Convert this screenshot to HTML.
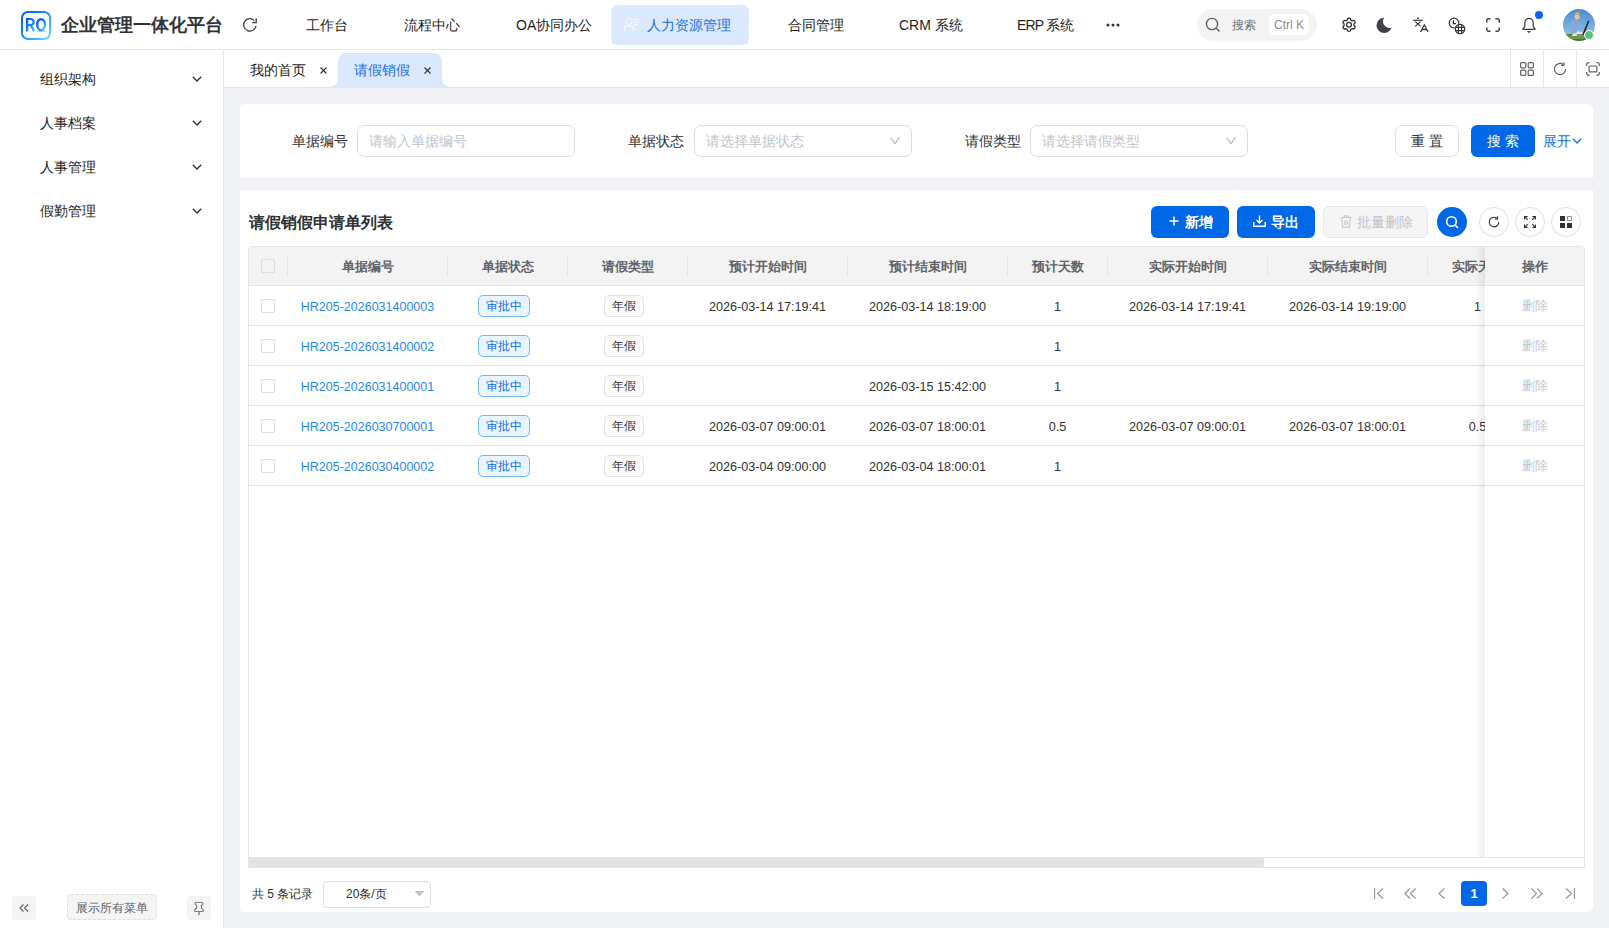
<!DOCTYPE html>
<html><head><meta charset="utf-8">
<style>
*{box-sizing:border-box;margin:0;padding:0}
html,body{width:1609px;height:928px;overflow:hidden;background:#f1f2f5;font-family:"Liberation Sans",sans-serif;color:#303133}
.a{position:absolute}
.t{position:absolute;white-space:nowrap;line-height:20px;height:20px}
#hdr{left:0;top:0;width:1609px;height:50px;background:#fff;border-bottom:1px solid #e4e6eb}
#side{left:0;top:50px;width:224px;height:878px;background:#fff;border-right:1px solid #e4e6eb}
#tabs{left:224px;top:50px;width:1385px;height:38px;background:#fff;border-bottom:1px solid #e4e6eb}
.card{position:absolute;background:#fff}
svg{position:absolute;overflow:visible}
.hd{position:absolute;top:10px;height:20px;line-height:20px;text-align:center;font-size:13px;font-weight:bold;color:#606266;white-space:nowrap}
.cl{position:absolute;height:39px;line-height:39px;text-align:center;white-space:nowrap;overflow:hidden}
.id{font-size:12.5px;color:#1e88f0;line-height:43px}
.dt{font-size:12.6px;color:#303133;line-height:43px}
.del{font-size:13px;color:#c6c8cc}
.tag1{width:52px;height:22px;line-height:20px;border:1px solid #74b6f5;background:#e8f5ff;border-radius:5px;font-size:12px;color:#0d6ae0;text-align:center}
.tag2{width:40px;height:22px;line-height:20px;border:1px solid #e3e3e5;background:#fafafa;border-radius:5px;font-size:12px;color:#303133;text-align:center}

</style></head><body>

<!-- HEADER -->
<div id="hdr" class="a">
  <div class="a" style="left:21px;top:11px;width:30px;height:29px;border-radius:7px;padding:2.4px;background:linear-gradient(135deg,#0050f2 0%,#1890ff 50%,#6ee9ff 100%)">
    <div style="width:25.2px;height:24.2px;border-radius:5px;background:#fff"></div>
  </div>
  <svg style="left:25px;top:17px" width="23" height="16" viewBox="0 0 23 16"><defs><linearGradient id="lg" x1="0" y1="0" x2="1" y2="1"><stop offset="0" stop-color="#0050f5"/><stop offset="0.6" stop-color="#1b8cff"/><stop offset="1" stop-color="#5fd8ff"/></linearGradient></defs><path d="M0.9 14.4V1H5.6C8.3 1 9.9 2.5 9.9 4.9C9.9 6.7 8.9 7.9 7.4 8.4L10.6 14.4H7.9L5.1 8.9H3.3V14.4ZM3.3 6.9H5.4C6.7 6.9 7.5 6.2 7.5 5C7.5 3.8 6.7 3.1 5.4 3.1H3.3Z" fill="url(#lg)"/><ellipse cx="16.1" cy="7.7" rx="3.9" ry="5.5" fill="none" stroke="url(#lg)" stroke-width="2.4"/><path d="M12.4 14.2H21.2" stroke="#8a8a8a" stroke-width="0.9" stroke-dasharray="1.2 0.5"/></svg>
  <div class="t" style="left:61px;top:15px;font-size:18px;font-weight:bold;color:#303236">企业管理一体化平台</div>
  <!-- refresh -->
  <svg style="left:243px;top:18px" width="14" height="14" viewBox="0 0 14 14"><path d="M13 7.9A6.2 6.2 0 1 1 11.4 2.6" fill="none" stroke="#3a3d42" stroke-width="1.3"/><path d="M13.2 0.3V4.6H9.2" fill="none" stroke="#3a3d42" stroke-width="1.3"/></svg>
  <div class="t" style="left:306px;top:15px;font-size:14px;color:#1d1e20">工作台</div>
  <div class="t" style="left:404px;top:15px;font-size:14px;color:#1d1e20">流程中心</div>
  <div class="t" style="left:516px;top:15px;font-size:14px;color:#1d1e20">OA协同办公</div>
  <div class="a" style="left:611px;top:5px;width:138px;height:40px;border-radius:6px;background:#dce8fb"></div>
  <svg style="left:622px;top:17px" width="18" height="16" viewBox="0 0 18 16"><circle cx="7" cy="4.3" r="3.1" fill="none" stroke="#f2f7fe" stroke-width="1.2"/><path d="M2.4 14.5V11.8C2.4 10.4 3.4 9.4 4.8 9.4H9.2C10.6 9.4 11.6 10.4 11.6 11.8V14.5" fill="none" stroke="#f6f9fe" stroke-width="1.2"/><path d="M12.1 2.5H17M12.1 5H17M12.1 7.5H15.6" stroke="#f6f9fe" stroke-width="1.1"/></svg>
  <div class="t" style="left:647px;top:15px;font-size:14px;color:#1b6fe3">人力资源管理</div>
  <div class="t" style="left:788px;top:15px;font-size:14px;color:#1d1e20">合同管理</div>
  <div class="t" style="left:899px;top:15px;font-size:14px;color:#1d1e20">CRM 系统</div>
  <div class="t" style="left:1017px;top:15px;font-size:14px;color:#1d1e20"><span style="letter-spacing:-0.9px">ERP </span>系统</div>
  <svg style="left:1106px;top:23px" width="14" height="4" viewBox="0 0 14 4"><circle cx="2" cy="2" r="1.5" fill="#303133"/><circle cx="7" cy="2" r="1.5" fill="#303133"/><circle cx="12" cy="2" r="1.5" fill="#303133"/></svg>

  <!-- search pill -->
  <div class="a" style="left:1197px;top:9px;width:120px;height:32px;border-radius:16px;background:#f3f3f4"></div>
  <svg style="left:1205px;top:17px" width="16" height="16" viewBox="0 0 16 16"><circle cx="7" cy="7" r="5.6" fill="none" stroke="#606266" stroke-width="1.4"/><path d="M11.2 11.2L14.5 14.5" stroke="#606266" stroke-width="1.4"/></svg>
  <div class="t" style="left:1232px;top:15px;font-size:12px;color:#6e7176">搜索</div>
  <div class="a" style="left:1269px;top:14px;width:40px;height:21px;border-radius:6px;background:#fff"></div>
  <div class="t" style="left:1274px;top:15px;font-size:12px;color:#8a8d92">Ctrl K</div>

  <!-- icons -->
  <svg style="left:1341px;top:17px" width="16" height="16" viewBox="0 0 16 16"><path d="M8 1.2L9.3 1.5L9.8 3.1L11.2 3.9L12.8 3.4L13.8 4.4L14.1 5.7L12.9 6.9V8.5L14.1 9.7L13.8 11L12.8 12L11.2 11.6L9.8 12.4L9.3 14L8 14.4L6.7 14L6.2 12.4L4.8 11.6L3.2 12L2.2 11L1.9 9.7L3.1 8.5V6.9L1.9 5.7L2.2 4.4L3.2 3.4L4.8 3.9L6.2 3.1L6.7 1.5Z" fill="none" stroke="#303133" stroke-width="1.3" stroke-linejoin="round"/><circle cx="8" cy="7.8" r="2.4" fill="none" stroke="#303133" stroke-width="1.3"/></svg>
  <svg style="left:1376px;top:16px" width="16" height="18" viewBox="0 0 16 18"><defs><mask id="mm"><rect width="16" height="18" fill="#fff"/><circle cx="13.6" cy="5.4" r="6.6" fill="#000"/></mask></defs><circle cx="8.2" cy="9.4" r="7.7" fill="#404348" mask="url(#mm)"/></svg>
  <svg style="left:1413px;top:17px" width="16" height="16" viewBox="0 0 16 16"><circle cx="5" cy="1.2" r="0.9" fill="#303133"/><path d="M0.3 3.3H9.7" stroke="#303133" stroke-width="1.2"/><path d="M2.2 4.6L7.6 9.4M7.6 4.6L2.2 9.4" stroke="#303133" stroke-width="1.2"/><path d="M7.6 15L11.3 7.8L15 15M8.9 12.5H13.7" fill="none" stroke="#303133" stroke-width="1.3"/></svg>
  <svg style="left:1448px;top:17px" width="18" height="18" viewBox="0 0 18 18"><circle cx="6" cy="6" r="4.8" fill="none" stroke="#303133" stroke-width="1.2"/><path d="M5.4 3.3V6.6H8" fill="none" stroke="#303133" stroke-width="1.2"/><circle cx="12" cy="12" r="5.6" fill="#fff"/><circle cx="12" cy="12" r="4.7" fill="none" stroke="#303133" stroke-width="1.3"/><path d="M7.6 10.4H16.4M7.6 13.6H16.4M10.4 7.5V16.5M13.6 7.5V16.5" stroke="#303133" stroke-width="1.1"/></svg>
  <svg style="left:1486px;top:18px" width="14" height="14" viewBox="0 0 14 14"><path d="M0.8 4.6V2.2C0.8 1.4 1.4 0.8 2.2 0.8H4.6M9.4 0.8H11.8C12.6 0.8 13.2 1.4 13.2 2.2V4.6M13.2 9.4V11.8C13.2 12.6 12.6 13.2 11.8 13.2H9.4M4.6 13.2H2.2C1.4 13.2 0.8 12.6 0.8 11.8V9.4" fill="none" stroke="#404348" stroke-width="1.5"/></svg>
  <svg style="left:1522px;top:17px" width="14" height="16" viewBox="0 0 14 16"><path d="M7 1.4C4.6 1.4 2.8 3.3 2.8 5.8V9.6L1 11.8C0.8 12.1 1 12.4 1.3 12.4H12.7C13 12.4 13.2 12.1 13 11.8L11.2 9.6V5.8C11.2 3.3 9.4 1.4 7 1.4Z" fill="none" stroke="#35383d" stroke-width="1.2" stroke-linejoin="round"/><path d="M5.6 14.2L7 15.2L8.4 14.2" fill="none" stroke="#35383d" stroke-width="1.2"/></svg>
  <div class="a" style="left:1535px;top:11px;width:8px;height:8px;border-radius:50%;background:#0b66e4"></div>
  <!-- avatar -->
  <svg style="left:1563px;top:9px" width="32" height="32" viewBox="0 0 32 32"><defs><clipPath id="ac"><circle cx="16" cy="16" r="16"/></clipPath><linearGradient id="sky" x1="0" y1="0" x2="0" y2="1"><stop offset="0" stop-color="#4b8bd3"/><stop offset="1" stop-color="#9ccdf0"/></linearGradient></defs>
  <g clip-path="url(#ac)"><rect width="32" height="32" fill="url(#sky)"/>
  <path d="M0 26C8 24 18 25 32 27V32H0Z" fill="#4f7330"/><path d="M2 27C8 25.5 16 26 24 27.5L20 30L4 30Z" fill="#6f9a45"/>
  <path d="M10 23C13 22 19 22.5 22 24.5L21 27H9Z" fill="#dfe6ea"/>
  <path d="M8 25L9 13C10 10.5 13 10 14.5 11L17.5 16L21 19.5L19 21L15 18.5L13.5 24Z" fill="#8aa6d6"/>
  <circle cx="14.2" cy="7.8" r="2.6" fill="#e6c3a0"/><path d="M11.5 7.5C11.3 4.5 13 2.6 15 3C16.5 3.3 17 5 16.6 6L14 5.6Z" fill="#d2ad66"/>
  <path d="M26.6 11.5L21.2 25.6L19 26L24.8 12Z" fill="#222428"/><path d="M14 25.5H21.5L22 26.5H13.5Z" fill="#333"/>
  </g></svg>
  <div class="a" style="left:1584px;top:30px;width:10px;height:10px;border-radius:50%;background:#55c57a;border:1.5px solid #fff"></div>
</div>

<!-- SIDEBAR -->
<div id="side" class="a">
  <div class="t" style="left:40px;top:19px;font-size:14px;color:#1d1e20">组织架构</div>
  <div class="t" style="left:40px;top:63px;font-size:14px;color:#1d1e20">人事档案</div>
  <div class="t" style="left:40px;top:107px;font-size:14px;color:#1d1e20">人事管理</div>
  <div class="t" style="left:40px;top:151px;font-size:14px;color:#1d1e20">假勤管理</div>
  <svg style="left:192px;top:26px" width="10" height="6" viewBox="0 0 10 6"><path d="M0.8 0.8L5 5L9.2 0.8" fill="none" stroke="#303133" stroke-width="1.3"/></svg>
  <svg style="left:192px;top:70px" width="10" height="6" viewBox="0 0 10 6"><path d="M0.8 0.8L5 5L9.2 0.8" fill="none" stroke="#303133" stroke-width="1.3"/></svg>
  <svg style="left:192px;top:114px" width="10" height="6" viewBox="0 0 10 6"><path d="M0.8 0.8L5 5L9.2 0.8" fill="none" stroke="#303133" stroke-width="1.3"/></svg>
  <svg style="left:192px;top:158px" width="10" height="6" viewBox="0 0 10 6"><path d="M0.8 0.8L5 5L9.2 0.8" fill="none" stroke="#303133" stroke-width="1.3"/></svg>

  <div class="a" style="left:12px;top:846px;width:24px;height:24px;border-radius:4px;background:#f3f3f4"></div>
  <svg style="left:19px;top:854px" width="10" height="8" viewBox="0 0 10 8"><path d="M4.5 0.5L1 4L4.5 7.5M9 0.5L5.5 4L9 7.5" fill="none" stroke="#606266" stroke-width="1.2"/></svg>
  <div class="a" style="left:67px;top:844px;width:90px;height:26px;border-radius:4px;background:#f4f4f5;border:1px dashed #dcdfe6"></div>
  <div class="t" style="left:76px;top:848px;font-size:12px;color:#606266">展示所有菜单</div>
  <div class="a" style="left:187px;top:846px;width:24px;height:24px;border-radius:4px;background:#f3f3f4"></div>
  <svg style="left:193px;top:851px" width="12" height="15" viewBox="0 0 12 15"><path d="M3 1.5H9C10 1.5 10.3 2.8 9.4 3.6L8.4 4.4V7L10 8.6C10.8 9.4 10.4 10.5 9.4 10.5H2.6C1.6 10.5 1.2 9.4 2 8.6L3.6 7V4.4L2.6 3.6C1.7 2.8 2 1.5 3 1.5Z" fill="none" stroke="#7d8085" stroke-width="1.2"/><path d="M6 10.5V14" stroke="#7d8085" stroke-width="1.4"/></svg>
</div>

<!-- TABS -->
<div id="tabs" class="a">
  <div class="t" style="left:26px;top:10px;font-size:14px;color:#1d1e20">我的首页</div>
  <svg style="left:96px;top:17px" width="7" height="7" viewBox="0 0 7 7"><path d="M0.5 0.5L6.5 6.5M6.5 0.5L0.5 6.5" stroke="#303133" stroke-width="1.1"/></svg>
  <div class="a" style="left:114px;top:3px;width:104px;height:34px;border-radius:8px 8px 0 0;background:#dce8fb"></div>
  <div class="a" style="left:106px;top:29px;width:8px;height:8px;background:radial-gradient(circle at 0 0,transparent 7.5px,#dce8fb 8px)"></div>
  <div class="a" style="left:218px;top:29px;width:8px;height:8px;background:radial-gradient(circle at 100% 0,transparent 7.5px,#dce8fb 8px)"></div>
  <div class="t" style="left:130px;top:10px;font-size:14px;color:#1b6fe3">请假销假</div>
  <svg style="left:200px;top:17px" width="7" height="7" viewBox="0 0 7 7"><path d="M0.5 0.5L6.5 6.5M6.5 0.5L0.5 6.5" stroke="#303133" stroke-width="1.1"/></svg>
  <svg style="left:1296px;top:12px" width="14" height="14" viewBox="0 0 14 14"><rect x="0.6" y="0.6" width="5.2" height="5.2" rx="1" fill="none" stroke="#606266" stroke-width="1.2"/><rect x="8.2" y="0.6" width="5.2" height="5.2" rx="1" fill="none" stroke="#606266" stroke-width="1.2"/><rect x="0.6" y="8.2" width="5.2" height="5.2" rx="1" fill="none" stroke="#606266" stroke-width="1.2"/><rect x="8.2" y="8.2" width="5.2" height="5.2" rx="1" fill="none" stroke="#606266" stroke-width="1.2"/></svg>
  <svg style="left:1329px;top:12px" width="14" height="14" viewBox="0 0 14 14"><path d="M12.6 7A5.6 5.6 0 1 1 10.4 2.6" fill="none" stroke="#606266" stroke-width="1.2"/><path d="M11 0.3V3.4H7.9" fill="none" stroke="#606266" stroke-width="1.2"/></svg>
  <svg style="left:1362px;top:12px" width="14" height="14" viewBox="0 0 14 14"><path d="M0.7 4V2.5C0.7 1.5 1.5 0.7 2.5 0.7H3.6M10.4 0.7H11.5C12.5 0.7 13.3 1.5 13.3 2.5V4M13.3 10V11.5C13.3 12.5 12.5 13.3 11.5 13.3H10.4M3.6 13.3H2.5C1.5 13.3 0.7 12.5 0.7 11.5V10" fill="none" stroke="#606266" stroke-width="1.2"/><rect x="3.1" y="4" width="7.8" height="5.8" rx="0.8" fill="none" stroke="#606266" stroke-width="1.2"/></svg>
  <div class="a" style="left:1286px;top:0;width:1px;height:37px;background:#e4e6eb"></div>
  <div class="a" style="left:1319px;top:0;width:1px;height:37px;background:#e4e6eb"></div>
  <div class="a" style="left:1352px;top:0;width:1px;height:37px;background:#e4e6eb"></div>
</div>

<!-- SEARCH CARD -->
<div class="card" style="left:240px;top:104px;width:1353px;height:74px;border-radius:6px 6px 0 0"></div>

<!-- TABLE CARD -->
<div class="card" style="left:240px;top:190px;width:1353px;height:722px;border-radius:0 0 6px 6px"></div>


<!-- SEARCH FORM -->
<div class="t" style="left:292px;top:131px;font-size:14px;color:#303133">单据编号</div>
<div class="a" style="left:357px;top:125px;width:218px;height:32px;border:1px solid #dddee1;border-radius:7px;background:#fff"></div>
<div class="t" style="left:369px;top:131px;font-size:14px;color:#c0c4cc">请输入单据编号</div>
<div class="t" style="left:628px;top:131px;font-size:14px;color:#303133">单据状态</div>
<div class="a" style="left:694px;top:125px;width:218px;height:32px;border:1px solid #dddee1;border-radius:7px;background:#fff"></div>
<div class="t" style="left:706px;top:131px;font-size:14px;color:#c0c4cc">请选择单据状态</div>
<svg style="left:890px;top:137px" width="10" height="7" viewBox="0 0 10 7"><path d="M0.5 0.5L5 6.5L9.5 0.5" fill="none" stroke="#aeb1b5" stroke-width="1.1"/></svg>
<div class="t" style="left:965px;top:131px;font-size:14px;color:#303133">请假类型</div>
<div class="a" style="left:1030px;top:125px;width:218px;height:32px;border:1px solid #dddee1;border-radius:7px;background:#fff"></div>
<div class="t" style="left:1042px;top:131px;font-size:14px;color:#c0c4cc">请选择请假类型</div>
<svg style="left:1226px;top:137px" width="10" height="7" viewBox="0 0 10 7"><path d="M0.5 0.5L5 6.5L9.5 0.5" fill="none" stroke="#aeb1b5" stroke-width="1.1"/></svg>
<div class="a" style="left:1395px;top:125px;width:64px;height:32px;border:1px solid #dddee1;border-radius:7px;background:#fff"></div>
<div class="t" style="left:1411px;top:131px;font-size:14px;color:#303133;letter-spacing:4px">重置</div>
<div class="a" style="left:1471px;top:125px;width:64px;height:32px;border-radius:6px;background:#0067e6"></div>
<div class="t" style="left:1487px;top:131px;font-size:14px;color:#fff;letter-spacing:4px;font-weight:500">搜索</div>
<div class="t" style="left:1543px;top:131px;font-size:14px;color:#1b6fe3">展开</div>
<svg style="left:1572px;top:138px" width="10" height="6" viewBox="0 0 10 6"><path d="M0.8 0.8L5 5L9.2 0.8" fill="none" stroke="#1b6fe3" stroke-width="1.4"/></svg>

<!-- TABLE TOOLBAR -->
<div class="t" style="left:249px;top:213px;font-size:16px;font-weight:bold;color:#303133">请假销假申请单列表</div>
<div class="a" style="left:1151px;top:206px;width:78px;height:32px;border-radius:6px;background:#0067e6"></div>
<svg style="left:1169px;top:216px" width="10" height="10" viewBox="0 0 10 10"><path d="M5 0.5V9.5M0.5 5H9.5" stroke="#fff" stroke-width="1.5"/></svg>
<div class="t" style="left:1185px;top:212px;font-size:14px;color:#fff;font-weight:bold">新增</div>
<div class="a" style="left:1237px;top:206px;width:78px;height:32px;border-radius:6px;background:#0067e6"></div>
<svg style="left:1253px;top:215px" width="13" height="12" viewBox="0 0 13 12"><path d="M6.5 0.5V8M3.5 5L6.5 8L9.5 5M0.8 7V11.2H12.2V7" fill="none" stroke="#fff" stroke-width="1.4"/></svg>
<div class="t" style="left:1271px;top:212px;font-size:14px;color:#fff;font-weight:bold">导出</div>
<div class="a" style="left:1323px;top:206px;width:105px;height:32px;border:1px solid #e4e7ed;border-radius:6px;background:#f5f5f5"></div>
<svg style="left:1340px;top:215px" width="12" height="13" viewBox="0 0 12 13"><path d="M0.5 2.5H11.5M4 2.5V0.8H8V2.5M1.8 2.5L2.5 12.2H9.5L10.2 2.5M4.8 5V10M7.2 5V10" fill="none" stroke="#c8cad0" stroke-width="1.2"/></svg>
<div class="t" style="left:1357px;top:212px;font-size:14px;color:#c0c4cc">批量删除</div>
<div class="a" style="left:1437px;top:207px;width:30px;height:30px;border-radius:50%;background:#0067e6"></div>
<svg style="left:1445px;top:215px" width="15" height="15" viewBox="0 0 15 15"><circle cx="6.5" cy="6.5" r="4.8" fill="none" stroke="#fff" stroke-width="1.6"/><path d="M10 10L13 13" stroke="#fff" stroke-width="1.6"/></svg>
<div class="a" style="left:1479px;top:207px;width:30px;height:30px;border-radius:50%;border:1px solid #dfe0e2;background:#fff"></div>
<svg style="left:1488px;top:216px" width="12" height="12" viewBox="0 0 12 12"><path d="M10.8 6A4.8 4.8 0 1 1 8.8 2.2" fill="none" stroke="#303133" stroke-width="1.1"/><path d="M9.5 0.3V3H6.8" fill="none" stroke="#303133" stroke-width="1.1"/></svg>
<div class="a" style="left:1515px;top:207px;width:30px;height:30px;border-radius:50%;border:1px solid #dfe0e2;background:#fff"></div>
<svg style="left:1524px;top:216px" width="12" height="12" viewBox="0 0 12 12"><path d="M0.6 3.6V0.6H3.6M0.6 0.6L3.8 3.8M8.4 0.6H11.4V3.6M11.4 0.6L8.2 3.8M11.4 8.4V11.4H8.4M11.4 11.4L8.2 8.2M3.6 11.4H0.6V8.4M0.6 11.4L3.8 8.2" fill="none" stroke="#303133" stroke-width="1.1"/></svg>
<div class="a" style="left:1551px;top:207px;width:30px;height:30px;border-radius:50%;border:1px solid #dfe0e2;background:#fff"></div>
<svg style="left:1560px;top:216px" width="12" height="12" viewBox="0 0 12 12"><rect x="0" y="0" width="5" height="5" fill="#303133"/><rect x="0" y="7" width="5" height="5" fill="#303133"/><rect x="7" y="7" width="5" height="5" fill="#303133"/><rect x="7.5" y="0.5" width="4" height="4" fill="none" stroke="#303133" stroke-width="1" stroke-dasharray="1 1"/></svg>

<!-- TABLE -->
<div class="a" style="left:248px;top:246px;width:1337px;height:622px;border:1px solid #e4e4e7;border-radius:4px 4px 0 0;overflow:hidden;background:#fff">
<div class="a" style="left:0;top:0;width:1335px;height:39px;background:#f3f3f4;border-bottom:1px solid #e4e4e7"></div>
<div class="a" style="left:38px;top:9px;width:1px;height:20px;background:#e4e4e7"></div>
<div class="a" style="left:198px;top:9px;width:1px;height:20px;background:#e4e4e7"></div>
<div class="a" style="left:318px;top:9px;width:1px;height:20px;background:#e4e4e7"></div>
<div class="a" style="left:438px;top:9px;width:1px;height:20px;background:#e4e4e7"></div>
<div class="a" style="left:598px;top:9px;width:1px;height:20px;background:#e4e4e7"></div>
<div class="a" style="left:758px;top:9px;width:1px;height:20px;background:#e4e4e7"></div>
<div class="a" style="left:858px;top:9px;width:1px;height:20px;background:#e4e4e7"></div>
<div class="a" style="left:1018px;top:9px;width:1px;height:20px;background:#e4e4e7"></div>
<div class="a" style="left:1178px;top:9px;width:1px;height:20px;background:#e4e4e7"></div>
<div class="a" style="left:1278px;top:9px;width:1px;height:20px;background:#e4e4e7"></div>
<div class="a" style="left:12px;top:12px;width:14px;height:14px;border:1px solid #dcdde0;border-radius:2px;background:transparent"></div>
<div class="hd" style="left:39px;width:159px">单据编号</div>
<div class="hd" style="left:199px;width:119px">单据状态</div>
<div class="hd" style="left:319px;width:119px">请假类型</div>
<div class="hd" style="left:439px;width:159px">预计开始时间</div>
<div class="hd" style="left:599px;width:159px">预计结束时间</div>
<div class="hd" style="left:759px;width:99px">预计天数</div>
<div class="hd" style="left:859px;width:159px">实际开始时间</div>
<div class="hd" style="left:1019px;width:159px">实际结束时间</div>
<div class="hd" style="left:1179px;width:99px">实际天数</div>
<div class="a" style="left:0;top:78px;width:1335px;height:1px;background:#e4e4e7"></div>
<div class="a" style="left:12px;top:52px;width:14px;height:14px;border:1px solid #dcdde0;border-radius:2px;background:#fff"></div>
<div class="cl id" style="left:39px;width:159px;top:39px">HR205-2026031400003</div>
<div class="a tag1" style="left:229px;top:48px">审批中</div>
<div class="a tag2" style="left:355px;top:48px">年假</div>
<div class="cl dt" style="left:439px;width:159px;top:39px">2026-03-14 17:19:41</div>
<div class="cl dt" style="left:599px;width:159px;top:39px">2026-03-14 18:19:00</div>
<div class="cl dt" style="left:759px;width:99px;top:39px">1</div>
<div class="cl dt" style="left:859px;width:159px;top:39px">2026-03-14 17:19:41</div>
<div class="cl dt" style="left:1019px;width:159px;top:39px">2026-03-14 19:19:00</div>
<div class="cl dt" style="left:1179px;width:99px;top:39px">1</div>
<div class="a" style="left:0;top:118px;width:1335px;height:1px;background:#e4e4e7"></div>
<div class="a" style="left:12px;top:92px;width:14px;height:14px;border:1px solid #dcdde0;border-radius:2px;background:#fff"></div>
<div class="cl id" style="left:39px;width:159px;top:79px">HR205-2026031400002</div>
<div class="a tag1" style="left:229px;top:88px">审批中</div>
<div class="a tag2" style="left:355px;top:88px">年假</div>
<div class="cl dt" style="left:759px;width:99px;top:79px">1</div>
<div class="a" style="left:0;top:158px;width:1335px;height:1px;background:#e4e4e7"></div>
<div class="a" style="left:12px;top:132px;width:14px;height:14px;border:1px solid #dcdde0;border-radius:2px;background:#fff"></div>
<div class="cl id" style="left:39px;width:159px;top:119px">HR205-2026031400001</div>
<div class="a tag1" style="left:229px;top:128px">审批中</div>
<div class="a tag2" style="left:355px;top:128px">年假</div>
<div class="cl dt" style="left:599px;width:159px;top:119px">2026-03-15 15:42:00</div>
<div class="cl dt" style="left:759px;width:99px;top:119px">1</div>
<div class="a" style="left:0;top:198px;width:1335px;height:1px;background:#e4e4e7"></div>
<div class="a" style="left:12px;top:172px;width:14px;height:14px;border:1px solid #dcdde0;border-radius:2px;background:#fff"></div>
<div class="cl id" style="left:39px;width:159px;top:159px">HR205-2026030700001</div>
<div class="a tag1" style="left:229px;top:168px">审批中</div>
<div class="a tag2" style="left:355px;top:168px">年假</div>
<div class="cl dt" style="left:439px;width:159px;top:159px">2026-03-07 09:00:01</div>
<div class="cl dt" style="left:599px;width:159px;top:159px">2026-03-07 18:00:01</div>
<div class="cl dt" style="left:759px;width:99px;top:159px">0.5</div>
<div class="cl dt" style="left:859px;width:159px;top:159px">2026-03-07 09:00:01</div>
<div class="cl dt" style="left:1019px;width:159px;top:159px">2026-03-07 18:00:01</div>
<div class="cl dt" style="left:1179px;width:99px;top:159px">0.5</div>
<div class="a" style="left:0;top:238px;width:1335px;height:1px;background:#e4e4e7"></div>
<div class="a" style="left:12px;top:212px;width:14px;height:14px;border:1px solid #dcdde0;border-radius:2px;background:#fff"></div>
<div class="cl id" style="left:39px;width:159px;top:199px">HR205-2026030400002</div>
<div class="a tag1" style="left:229px;top:208px">审批中</div>
<div class="a tag2" style="left:355px;top:208px">年假</div>
<div class="cl dt" style="left:439px;width:159px;top:199px">2026-03-04 09:00:00</div>
<div class="cl dt" style="left:599px;width:159px;top:199px">2026-03-04 18:00:01</div>
<div class="cl dt" style="left:759px;width:99px;top:199px">1</div>
<div class="a" style="left:1226px;top:0;width:10px;height:610px;background:linear-gradient(90deg,rgba(0,0,0,0),rgba(0,0,0,0.07))"></div>
<div class="a" style="left:1236px;top:0;width:99px;height:610px;background:#fff">
<div class="a" style="left:0;top:0;width:99px;height:39px;background:#f3f3f4;border-bottom:1px solid #e4e4e7"></div>
<div class="hd" style="left:0;width:99px">操作</div>
<div class="a" style="left:0;top:78px;width:99px;height:1px;background:#e4e4e7"></div>
<div class="cl del" style="left:0;width:99px;top:39px">删除</div>
<div class="a" style="left:0;top:118px;width:99px;height:1px;background:#e4e4e7"></div>
<div class="cl del" style="left:0;width:99px;top:79px">删除</div>
<div class="a" style="left:0;top:158px;width:99px;height:1px;background:#e4e4e7"></div>
<div class="cl del" style="left:0;width:99px;top:119px">删除</div>
<div class="a" style="left:0;top:198px;width:99px;height:1px;background:#e4e4e7"></div>
<div class="cl del" style="left:0;width:99px;top:159px">删除</div>
<div class="a" style="left:0;top:238px;width:99px;height:1px;background:#e4e4e7"></div>
<div class="cl del" style="left:0;width:99px;top:199px">删除</div>
</div>
<div class="a" style="left:0;top:610px;width:1335px;height:1px;background:#e4e4e7"></div>
<div class="a" style="left:0;top:610px;width:1015px;height:11px;background:#e2e2e5;border-radius:0 3px 3px 0"></div>
</div>

<!-- FOOTER -->
<div class="t" style="left:252px;top:884px;font-size:12px;color:#303133">共 5 条记录</div>
<div class="a" style="left:323px;top:881px;width:108px;height:27px;border:1px solid #dddee1;border-radius:4px;background:#fff"></div>
<div class="t" style="left:346px;top:884px;font-size:12px;color:#303133">20条/页</div>
<svg style="left:415px;top:891px" width="9" height="5" viewBox="0 0 9 5"><path d="M-0.5 0H9.5L4.5 5.5Z" fill="#bfc2c8"/></svg>
<svg style="left:1374px;top:888px" width="10" height="11" viewBox="0 0 10 11"><path d="M0.6 0V11M9 0.5L3.5 5.5L9 10.5" fill="none" stroke="#909399" stroke-width="1.1"/></svg>
<svg style="left:1404px;top:888px" width="12" height="11" viewBox="0 0 12 11"><path d="M6 0.5L0.8 5.5L6 10.5M11.6 0.5L6.4 5.5L11.6 10.5" fill="none" stroke="#909399" stroke-width="1.1"/></svg>
<svg style="left:1438px;top:888px" width="7" height="11" viewBox="0 0 7 11"><path d="M6.4 0.5L1 5.5L6.4 10.5" fill="none" stroke="#909399" stroke-width="1.1"/></svg>
<div class="a" style="left:1461px;top:881px;width:26px;height:25px;border-radius:4px;background:#0067e6"></div>
<div class="t" style="left:1461px;top:884px;width:26px;text-align:center;font-size:13px;font-weight:bold;color:#fff">1</div>
<svg style="left:1502px;top:888px" width="7" height="11" viewBox="0 0 7 11"><path d="M0.6 0.5L6 5.5L0.6 10.5" fill="none" stroke="#909399" stroke-width="1.1"/></svg>
<svg style="left:1531px;top:888px" width="12" height="11" viewBox="0 0 12 11"><path d="M0.4 0.5L5.6 5.5L0.4 10.5M6 0.5L11.2 5.5L6 10.5" fill="none" stroke="#909399" stroke-width="1.1"/></svg>
<svg style="left:1565px;top:888px" width="10" height="11" viewBox="0 0 10 11"><path d="M9.4 0V11M1 0.5L6.5 5.5L1 10.5" fill="none" stroke="#909399" stroke-width="1.1"/></svg>

</body></html>
